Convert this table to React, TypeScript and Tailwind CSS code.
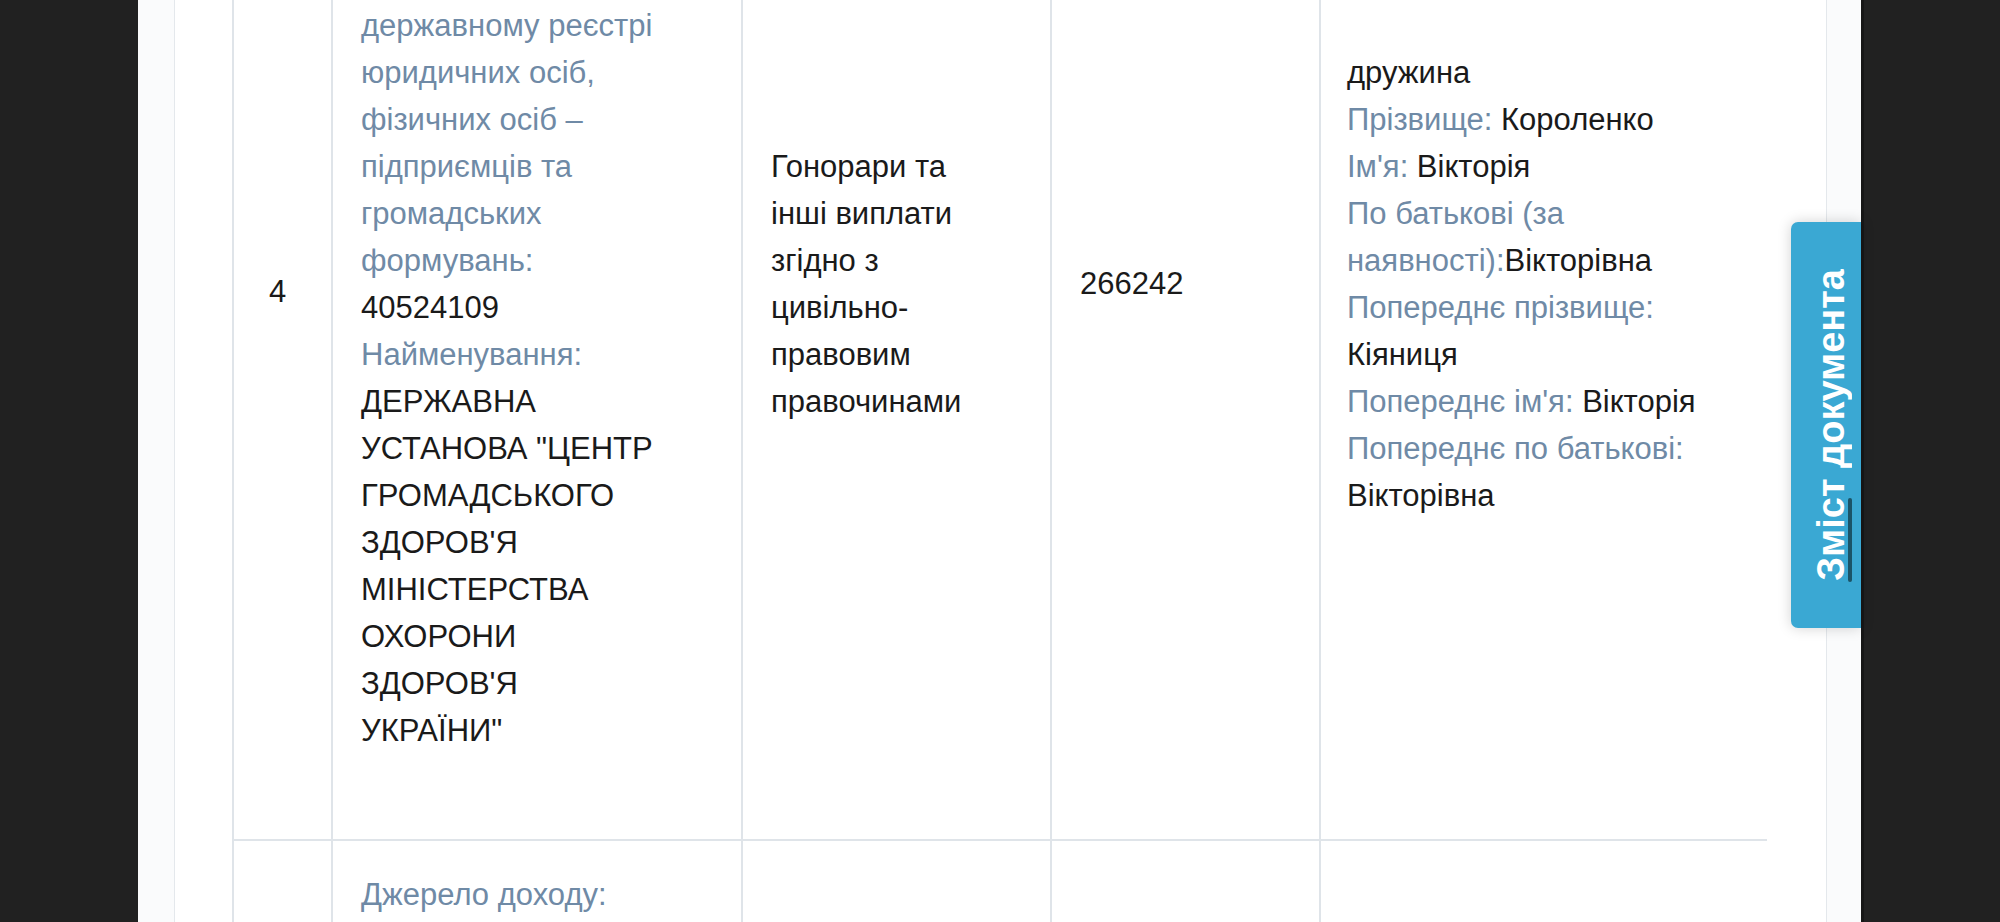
import React from "react";

function Lb({ children }: { children: React.ReactNode }) {
  return <span className="text-[#6f8aa6]">{children}</span>;
}

const cell = "shrink-0 border-l-2 border-[#dfe4e9]";

export default function App() {
  return (
    <div className="flex h-[922px] w-full overflow-hidden bg-[#212121] font-['Liberation_Sans',Arial,sans-serif]">
      <div className="w-[138px] shrink-0" />
      <div className="relative h-full w-[1723px] shrink-0 bg-[#fafbfc] pl-[36px]">
        <div className="flex h-full w-[1653px] flex-col border-x border-[#e4e8ec] bg-white pl-[57px] pr-[59px]">
          <div className="mt-[-272px] w-[1535px] shrink-0 text-[31px] leading-[47px] text-[#1a1a1a]">
            {/* Row 4 */}
            <div className="flex border-b-2 border-[#dfe4e9]">
              <div className={`${cell} flex w-[99px] flex-col justify-center pl-[35px] pt-[16px]`}>4</div>
              <div className={`${cell} w-[410px] whitespace-nowrap pl-[28px] pt-[39px] pb-[85px]`}>
                <div><Lb>Джерело доходу:</Lb></div>
                <div>юридична особа,</div>
                <div>зареєстрована в</div>
                <div>Україні</div>
                <div>
                  <Lb>
                    Код в Єдиному
                    <br />
                    державному реєстрі
                    <br />
                    юридичних осіб,
                    <br />
                    фізичних осіб –
                    <br />
                    підприємців та
                    <br />
                    громадських
                    <br />
                    формувань:
                  </Lb>
                </div>
                <div>40524109</div>
                <div><Lb>Найменування:</Lb></div>
                <div>
                  ДЕРЖАВНА
                  <br />
                  УСТАНОВА "ЦЕНТР
                  <br />
                  ГРОМАДСЬКОГО
                  <br />
                  ЗДОРОВ'Я
                  <br />
                  МІНІСТЕРСТВА
                  <br />
                  ОХОРОНИ
                  <br />
                  ЗДОРОВ'Я
                  <br />
                  УКРАЇНИ"
                </div>
              </div>
              <div className={`${cell} flex w-[309px] flex-col justify-center whitespace-nowrap pl-[28px]`}>
                <div>
                  Гонорари та
                  <br />
                  інші виплати
                  <br />
                  згідно з
                  <br />
                  цивільно-
                  <br />
                  правовим
                  <br />
                  правочинами
                </div>
              </div>
              <div className={`${cell} flex w-[269px] flex-col justify-center pl-[28px]`}>
                <div>266242</div>
              </div>
              <div className={`${cell} flex w-[448px] flex-col justify-center whitespace-nowrap pl-[26px]`}>
                <div>дружина</div>
                <div>
                  <Lb>Прізвище:</Lb> Короленко
                </div>
                <div>
                  <Lb>Ім'я:</Lb> Вікторія
                </div>
                <div>
                  <Lb>
                    По батькові (за
                    <br />
                    наявності):
                  </Lb>
                  Вікторівна
                </div>
                <div>
                  <Lb>Попереднє прізвище:</Lb>
                  <br />
                  Кіяниця
                </div>
                <div>
                  <Lb>Попереднє ім'я:</Lb> Вікторія
                </div>
                <div>
                  <Lb>Попереднє по батькові:</Lb>
                  <br />
                  Вікторівна
                </div>
              </div>
            </div>
            {/* Row 5 */}
            <div className="flex">
              <div className={`${cell} flex w-[99px] flex-col justify-center pl-[35px]`}>5</div>
              <div className={`${cell} w-[410px] whitespace-nowrap pl-[28px] pt-[30px] pb-[40px]`}>
                <div><Lb>Джерело доходу:</Lb></div>
                <div>юридична особа,</div>
                <div>зареєстрована в</div>
                <div>Україні</div>
                <div><Lb>Код в Єдиному</Lb></div>
                <div><Lb>державному реєстрі</Lb></div>
                <div><Lb>юридичних осіб,</Lb></div>
                <div><Lb>фізичних осіб –</Lb></div>
              </div>
              <div className={`${cell} flex w-[309px] flex-col justify-center pl-[28px]`}>
                <div>Заробітна плата</div>
              </div>
              <div className={`${cell} flex w-[269px] flex-col justify-center pl-[28px]`}>
                <div>98000</div>
              </div>
              <div className={`${cell} flex w-[448px] flex-col justify-center pl-[26px]`}>
                <div>дружина</div>
              </div>
            </div>
          </div>
        </div>
        {/* Side tab */}
        <div className="absolute right-0 top-[222px] flex h-[406px] w-[70px] items-center justify-center rounded-l-[7px] bg-[#3aa8d3] pl-[10px] shadow-[0_0_14px_rgba(0,0,0,0.18)]">
          <span className="rotate-180 whitespace-nowrap text-[38px] font-bold leading-none text-white [writing-mode:vertical-rl]">
            Зміст документа
          </span>
          <div className="absolute left-[57px] top-[276px] h-[84px] w-[4px] rounded-full bg-[#1b5468]" />
        </div>
      </div>
      <div className="h-full flex-1 border-l-[3px] border-[#171717]" />
    </div>
  );
}
